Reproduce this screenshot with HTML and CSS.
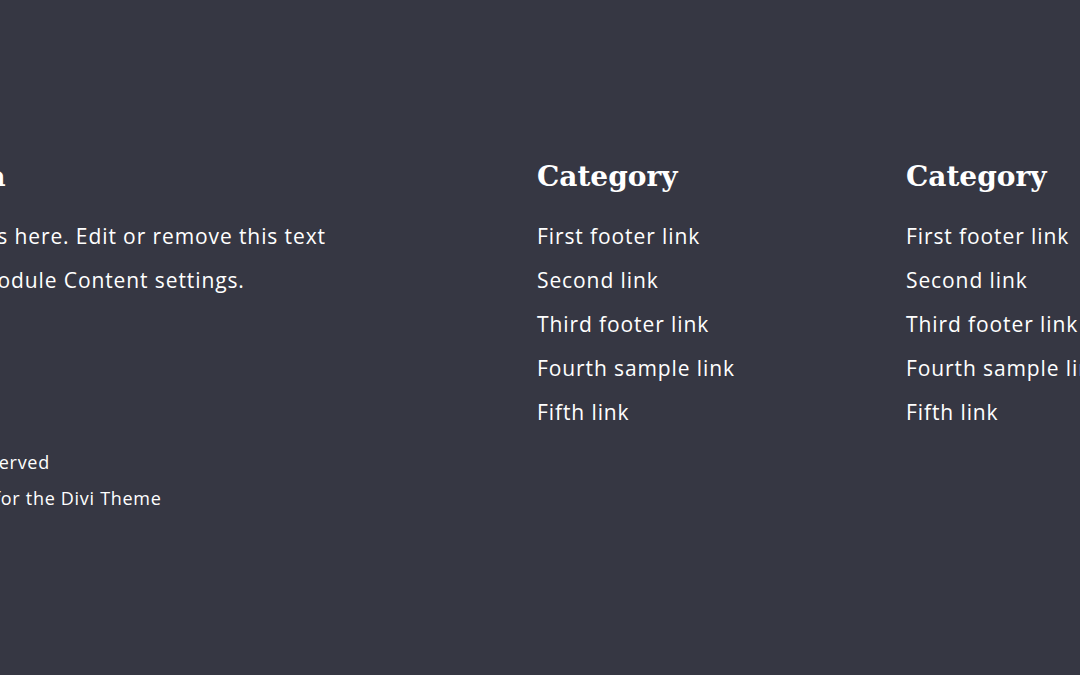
FILE: index.html
```html
<!DOCTYPE html>
<html lang="en">
<head>
    <meta charset="UTF-8">
    <meta name="viewport" content="width=device-width, initial-scale=1.0">
    <title>Footer</title>
    <link rel="stylesheet" href="styles.css">
</head>
<body>
    <footer class="footer">
        <div class="footer-row">
            <div class="footer-col about">
                <h4 class="footer-title">Studio Luna</h4>
                <p class="footer-text">Your content goes here. Edit or remove this text<br>inline or in the module Content settings.</p>
                <div class="copyright">
                    <p>© 2024 All rights reserved</p>
                    <p>Free Website Packs for the Divi Theme</p>
                </div>
            </div>
            <div class="footer-col links">
                <h4 class="footer-title">Category</h4>
                <ul class="footer-links">
                    <li><a href="#">First footer link</a></li>
                    <li><a href="#">Second link</a></li>
                    <li><a href="#">Third footer link</a></li>
                    <li><a href="#">Fourth sample link</a></li>
                    <li><a href="#">Fifth link</a></li>
                </ul>
            </div>
            <div class="footer-col links">
                <h4 class="footer-title">Category</h4>
                <ul class="footer-links">
                    <li><a href="#">First footer link</a></li>
                    <li><a href="#">Second link</a></li>
                    <li><a href="#">Third footer link</a></li>
                    <li><a href="#">Fourth sample link</a></li>
                    <li><a href="#">Fifth link</a></li>
                </ul>
            </div>
        </div>
    </footer>
</body>
</html>
```

FILE: styles.css
```css
body {
    font-family: "Open Sans", "Liberation Sans", sans-serif;
    margin: 0;
    padding: 0;
    background-color: #363743;
    color: #ffffff;
    overflow: hidden;
}
.footer {
    height: 675px;
    padding-top: 156px;
    box-sizing: border-box;
}
.footer-row {
    display: flex;
    margin-left: -185px;
    gap: 49px;
    white-space: nowrap;
}
.footer-col {
    flex-shrink: 0;
}
.footer-col.about {
    width: 673px;
}
.footer-col.links {
    width: 320px;
}
.footer-title {
    font-family: "DejaVu Serif", serif;
    font-weight: bold;
    font-size: 28px;
    line-height: 42px;
    margin: 0 0 16px;
    color: #ffffff;
}
.footer-text {
    font-size: 21px;
    letter-spacing: 0.9px;
    line-height: 44px;
    margin: 0;
}
.copyright {
    margin-top: 142px;
}
.copyright p {
    font-size: 18px;
    letter-spacing: 0.7px;
    line-height: 36px;
    margin: 0;
}
.footer-links {
    list-style: none;
    margin: 0;
    padding: 0;
}
.footer-links li {
    font-size: 21px;
    letter-spacing: 0.9px;
    line-height: 44px;
}
.footer-links a {
    color: #ffffff;
    text-decoration: none;
}
```
